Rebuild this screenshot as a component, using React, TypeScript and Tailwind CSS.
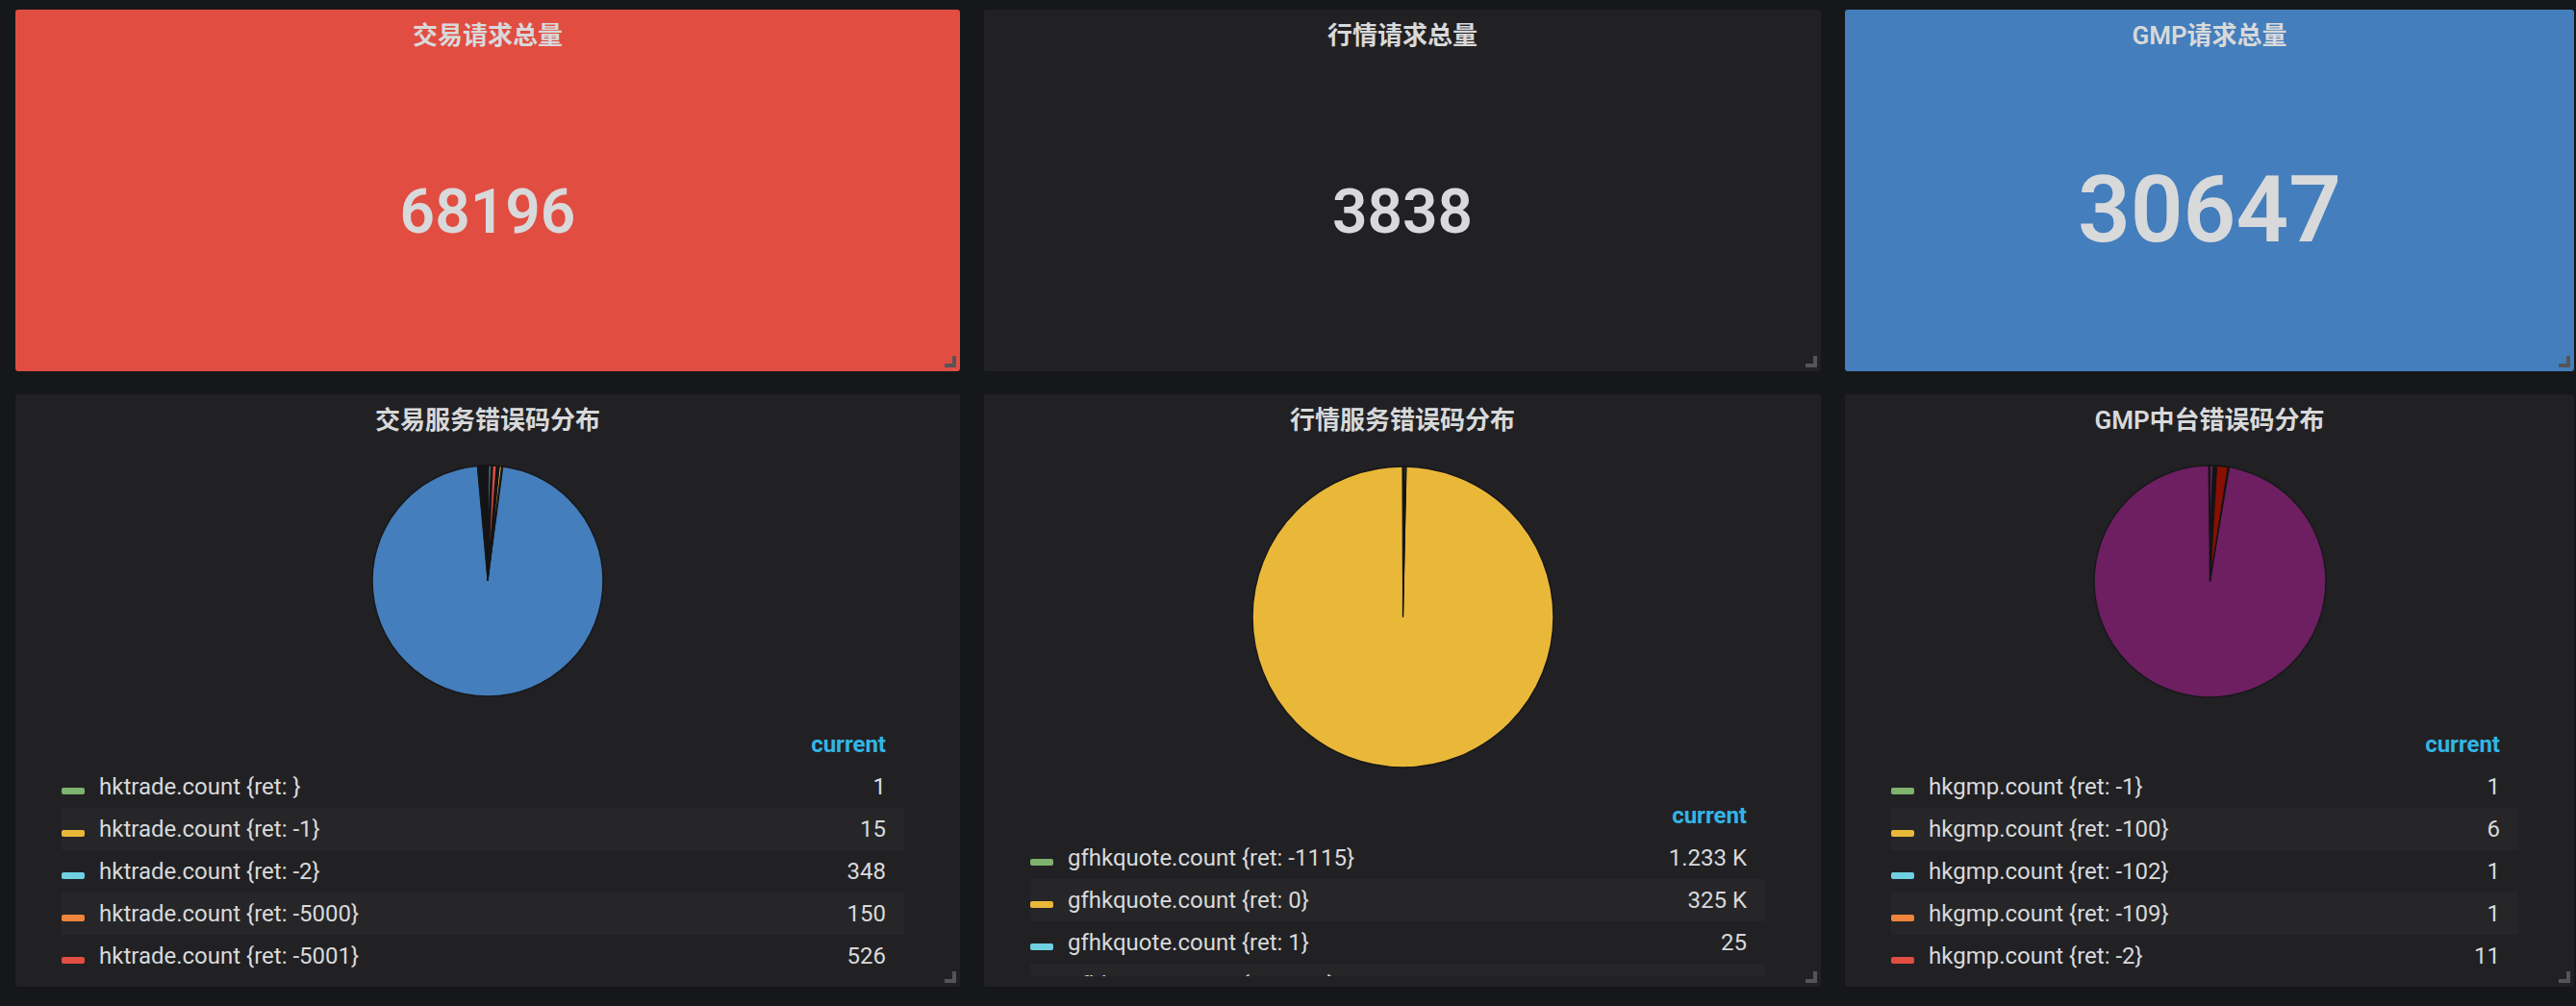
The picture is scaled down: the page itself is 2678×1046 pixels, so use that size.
import React from "react";

const FONT = { fontFamily: "Roboto, 'Noto Sans CJK SC', sans-serif" };

type Row = { name: string; value: string; color: string };

function arc(cx: number, cy: number, r: number, a0: number, a1: number) {
  const p = (a: number) => {
    const t = ((a - 90) * Math.PI) / 180;
    return `${cx + r * Math.cos(t)} ${cy + r * Math.sin(t)}`;
  };
  const large = a1 - a0 > 180 ? 1 : 0;
  return `M ${cx} ${cy} L ${p(a0)} A ${r} ${r} 0 ${large} 1 ${p(a1)} Z`;
}

// slices: [start deg, end deg, color]
function Pie(props: { size: number; fill: string; wedge: [number, number]; slices: [number, number, string][] }) {
  const { size, fill, wedge, slices } = props;
  const c = size / 2;
  const r = c - 1;
  return (
    <svg width={size} height={size} viewBox={`0 0 ${size} ${size}`}>
      <circle cx={c} cy={c} r={r} fill={fill} stroke="#18181a" strokeWidth="1.5" />
      <path d={arc(c, c, r, wedge[0], wedge[1])} fill="#141416" stroke="#141416" strokeWidth="1" />
      {slices.map(([a0, a1, col], i) => (
        <path key={i} d={arc(c, c, r, a0, a1)} fill={col} stroke="#141416" strokeWidth="1.4" />
      ))}
    </svg>
  );
}

function Handle() {
  return <div className="absolute right-[4px] bottom-[4px] w-[12px] h-[12px] border-r-[4px] border-b-[4px] border-[#555558]" />;
}

function StatPanel(props: { title: string; value: string; bg: string; big?: boolean }) {
  return (
    <div className={`relative flex flex-col rounded-[3px] ${props.bg}`}>
      <div className="h-[46px] pt-[14px] text-center text-[26px] leading-[26px] font-semibold text-[#d8d9da]">{props.title}</div>
      <div className="flex-1 flex items-center justify-center">
        {props.big ? (
          <span className="text-[96px] leading-none font-semibold text-[#d8d9da] pb-[6px]">{props.value}</span>
        ) : (
          <span className="text-[64px] leading-none font-semibold text-[#d8d9da]">{props.value}</span>
        )}
      </div>
      <Handle />
    </div>
  );
}

function PiePanel(props: { title: string; pieBox: string; pie: React.ReactNode; rows: Row[] }) {
  return (
    <div className="relative flex flex-col rounded-[3px] bg-[#212124] pb-[11px]">
      <div className="h-[46px] pt-[14px] text-center text-[26px] leading-[26px] font-semibold text-[#d8d9da]">{props.title}</div>
      <div className={`flex items-center justify-center ${props.pieBox}`}>{props.pie}</div>
      <div className="flex-1 overflow-hidden ml-[48px] mr-[58px]">
        <div className="h-[44px] flex items-center justify-end pr-[19px] text-[24px] font-bold text-[#33b5e5]">current</div>
        {props.rows.map((r, i) => (
          <div key={i} className={`h-[44px] flex items-center text-[24px] text-[#d8d9da] ${i % 2 === 1 ? "bg-[#262628]" : ""}`}>
            <span className="w-[24px] h-[7px] mt-[9px] rounded-[2px] shrink-0" style={{ background: r.color }} />
            <span className="ml-[15px] flex-1 whitespace-nowrap">{r.name}</span>
            <span className="pr-[19px]">{r.value}</span>
          </div>
        ))}
      </div>
      <Handle />
    </div>
  );
}

const G = "#7eb26d";
const Y = "#eab839";
const C = "#6ed0e0";
const O = "#ef843c";
const R = "#e24d42";

export default function App() {
  return (
    <div className="w-[2678px] h-[1046px] bg-[#161719] pt-[10px] pl-[16px] overflow-hidden" style={FONT}>
      <div className="grid grid-cols-[982px_870px_758px] grid-rows-[376px_616px] gap-x-[25px] gap-y-[24px]">
        <StatPanel title="交易请求总量" value="68196" bg="bg-[#e24d42]" />
        <StatPanel title="行情请求总量" value="3838" bg="bg-[#212124]" />
        <StatPanel title="GMP请求总量" value="30647" bg="bg-[#447ebc]" big />

        <PiePanel
          title="交易服务错误码分布"
          pieBox="h-[296px]"
          pie={
            <Pie
              size={242}
              fill="#447ebc"
              wedge={[-5.2, 7.6]}
              slices={[
                [-3.4, -3.0, "#705da0"],
                [0.5, 1.6, C],
                [2.4, 4.4, R],
                [5.8, 7.0, Y],
              ]}
            />
          }
          rows={[
            { name: "hktrade.count {ret: }", value: "1", color: G },
            { name: "hktrade.count {ret: -1}", value: "15", color: Y },
            { name: "hktrade.count {ret: -2}", value: "348", color: C },
            { name: "hktrade.count {ret: -5000}", value: "150", color: O },
            { name: "hktrade.count {ret: -5001}", value: "526", color: R },
          ]}
        />
        <PiePanel
          title="行情服务错误码分布"
          pieBox="h-[370px]"
          pie={<Pie size={315} fill="#eab839" wedge={[-0.2, 1.3]} slices={[[0.5, 1.1, G]]} />}
          rows={[
            { name: "gfhkquote.count {ret: -1115}", value: "1.233 K", color: G },
            { name: "gfhkquote.count {ret: 0}", value: "325 K", color: Y },
            { name: "gfhkquote.count {ret: 1}", value: "25", color: C },
            { name: "gfhkquote.count {ret: 100}", value: "274", color: O },
          ]}
        />
        <PiePanel
          title="GMP中台错误码分布"
          pieBox="h-[296px]"
          pie={
            <Pie
              size={243}
              fill="#6d1f62"
              wedge={[-0.7, 9.6]}
              slices={[
                [0.2, 1.3, "#ba43a9"],
                [3.3, 9.0, "#890f02"],
              ]}
            />
          }
          rows={[
            { name: "hkgmp.count {ret: -1}", value: "1", color: G },
            { name: "hkgmp.count {ret: -100}", value: "6", color: Y },
            { name: "hkgmp.count {ret: -102}", value: "1", color: C },
            { name: "hkgmp.count {ret: -109}", value: "1", color: O },
            { name: "hkgmp.count {ret: -2}", value: "11", color: R },
          ]}
        />
      </div>
    </div>
  );
}
